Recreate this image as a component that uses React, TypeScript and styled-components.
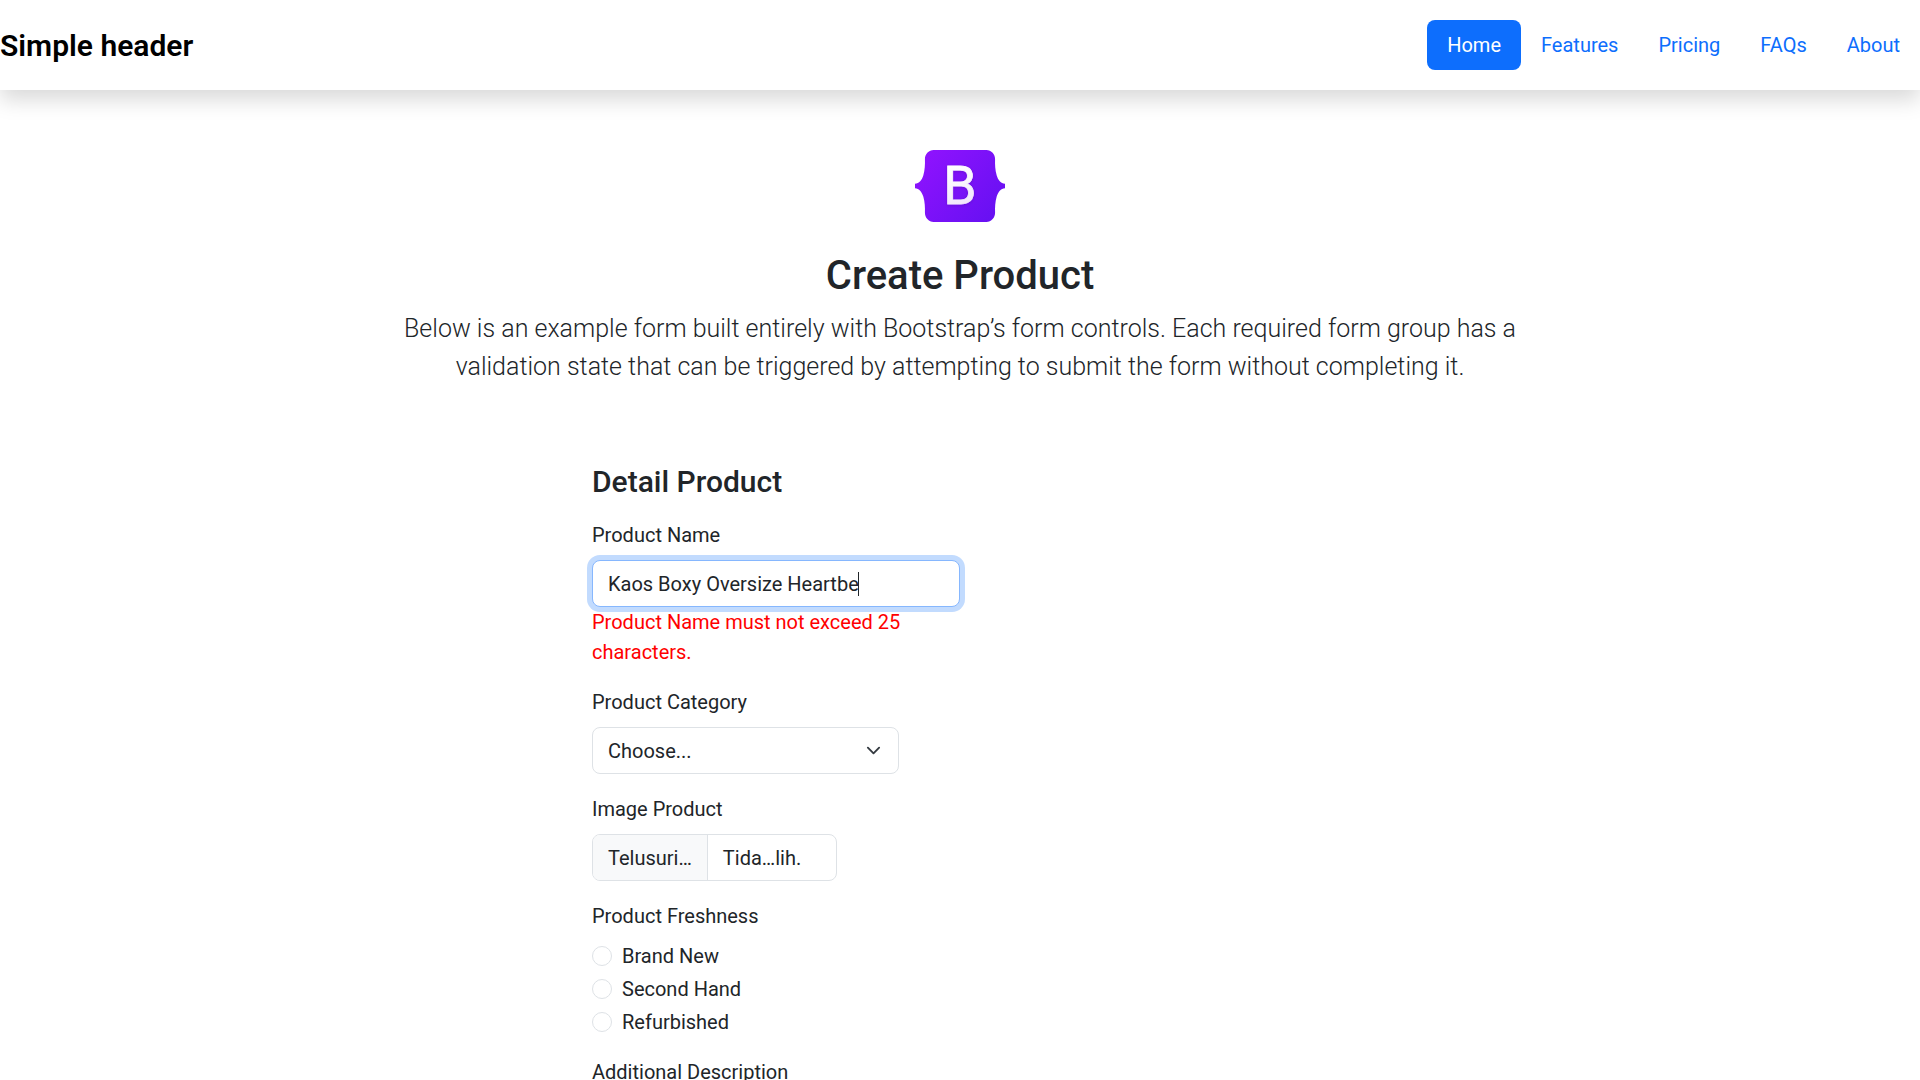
import React, { useState } from "react";
import styled, { createGlobalStyle, css } from "styled-components";

const GlobalStyle = createGlobalStyle`
  *, *::before, *::after { box-sizing: border-box; }
  body {
    margin: 0;
    background: #fff;
    color: #212529;
    font-family: Roboto, "Liberation Sans", sans-serif;
    font-size: 20px;
    line-height: 30px;
  }
  h1, h2, p, fieldset { margin: 0; }
  input, select, textarea { font: inherit; color: inherit; }
`;

const Page = styled.div`
  height: 100vh;
  overflow: hidden;
`;

const Header = styled.header`
  display: flex;
  align-items: center;
  justify-content: space-between;
  padding: 20px 0;
  box-shadow: 0 10px 20px rgba(0, 0, 0, 0.15);
`;

const Brand = styled.a`
  color: #000;
  font-size: 30px;
  line-height: 45px;
  font-weight: 600;
  text-decoration: none;
`;

const Nav = styled.nav`
  display: flex;
`;

const NavLink = styled.a<{ $active?: boolean }>`
  padding: 10px 20px;
  border-radius: 8px;
  text-decoration: none;
  color: ${(p) => (p.$active ? "#fff" : "#0d6efd")};
  background: ${(p) => (p.$active ? "#0d6efd" : "transparent")};
`;

const Main = styled.main`
  max-width: 1200px;
  margin: 0 auto;
  padding: 0 15px;
`;

const Hero = styled.section`
  display: flex;
  flex-direction: column;
  align-items: center;
  padding: 60px 0;
  text-align: center;
`;

const Logo = styled.svg`
  display: block;
  width: 90px;
  height: 72px;
  margin-bottom: 30px;
`;

const Title = styled.h1`
  margin-bottom: 10px;
  font-size: 40px;
  line-height: 48px;
  font-weight: 500;
`;

const Lead = styled.p`
  font-size: 25px;
  line-height: 38px;
  font-weight: 300;
`;

const Form = styled.form`
  display: flex;
  flex-direction: column;
  gap: 20px;
  max-width: 736px;
  margin: 18px auto 0;
`;

const SectionTitle = styled.h2`
  font-size: 30px;
  line-height: 36px;
  font-weight: 500;
`;

const Field = styled.div<{ $columns: number }>`
  display: flex;
  flex-direction: column;
  width: calc(100% * ${(p) => p.$columns} / 12);
`;

const labelStyle = css`
  margin-bottom: 10px;
`;

const Label = styled.label`
  ${labelStyle}
`;

const controlStyle = css`
  width: 100%;
  height: 47px;
  border: 1px solid #dee2e6;
  border-radius: 8px;
  background: #fff;
`;

const TextBox = styled.div`
  position: relative;
`;

const TextInput = styled.input`
  ${controlStyle}
  display: block;
  padding: 7px 15px;
  border-color: #86b7fe;
  outline: 0;
  box-shadow: 0 0 0 5px #c2dbfe;
  caret-color: transparent;
`;

const Caret = styled.span`
  position: absolute;
  top: 12px;
  left: 266px;
  width: 1px;
  height: 24px;
  background: #212529;
`;

const ErrorText = styled.p`
  color: #f00;
`;

const SelectBox = styled.div`
  display: grid;
  align-items: center;
`;

const Select = styled.select`
  ${controlStyle}
  grid-area: 1 / 1;
  appearance: none;
  padding: 7px 45px 7px 15px;
`;

const Chevron = styled.svg`
  grid-area: 1 / 1;
  justify-self: end;
  width: 15px;
  height: 15px;
  margin-right: 18px;
  pointer-events: none;
`;

const FilePicker = styled.label`
  ${controlStyle}
  display: flex;
  overflow: hidden;
`;

const FileInput = styled.input`
  width: 0;
  height: 0;
  opacity: 0;
`;

const FileButton = styled.span`
  padding: 8px 15px 7px;
  border-right: 1px solid #dee2e6;
  background: #f8f9fa;
`;

const FileName = styled.span`
  padding: 8px 15px 7px;
`;

const RadioGroup = styled.fieldset`
  display: flex;
  flex-direction: column;
  gap: 3px;
  min-width: 0;
  padding: 0;
  border: 0;
`;

const Legend = styled.legend`
  ${labelStyle}
  padding: 0;
`;

const RadioLabel = styled.label`
  display: flex;
  align-items: center;
  gap: 10px;
`;

const Radio = styled.input`
  appearance: none;
  width: 20px;
  height: 20px;
  margin: 0;
  border: 1px solid #dee2e6;
  border-radius: 50%;
  background: #fff;

  &:checked {
    border: 6px solid #0d6efd;
  }
`;

const TextArea = styled.textarea`
  ${controlStyle}
  height: 120px;
  padding: 7px 15px;
`;

const links = ["Home", "Features", "Pricing", "FAQs", "About"];
const conditions = ["Brand New", "Second Hand", "Refurbished"];

function BootstrapLogo() {
  return (
    <Logo viewBox="0 0 118 94" preserveAspectRatio="none" role="img" aria-label="Bootstrap">
      <defs>
        <linearGradient id="body" x1="10" y1="2" x2="108" y2="90" gradientUnits="userSpaceOnUse">
          <stop stopColor="#9013fe" />
          <stop offset="1" stopColor="#6610f2" />
        </linearGradient>
        <linearGradient id="letter" x1="50" y1="21" x2="65" y2="72" gradientUnits="userSpaceOnUse">
          <stop stopColor="#fff" />
          <stop offset="1" stopColor="#f1e5fc" />
        </linearGradient>
        <filter id="shade" x="-20%" y="-20%" width="140%" height="140%">
          <feDropShadow dx="0" dy="1" stdDeviation="2" floodOpacity="0.15" />
        </filter>
      </defs>
      <path
        fill="url(#body)"
        d="M24.509 0c-6.733 0-11.715 5.893-11.492 12.284.214 6.14-.064 14.092-2.066 20.577C8.943 39.365 5.547 43.485 0 44.014v5.972c5.547.529 8.943 4.649 10.951 11.153 2.002 6.485 2.28 14.437 2.066 20.577C12.794 88.106 17.776 94 24.51 94H93.5c6.733 0 11.714-5.893 11.491-12.284-.214-6.14.064-14.092 2.066-20.577 2.009-6.504 5.396-10.624 10.943-11.153v-5.972c-5.547-.529-8.934-4.649-10.943-11.153-2.002-6.484-2.28-14.437-2.066-20.577C105.214 5.894 100.233 0 93.5 0H24.508z"
      />
      <text
        x="59"
        y="71"
        textAnchor="middle"
        fontSize="70"
        fontWeight="400"
        fontFamily="Roboto, sans-serif"
        fill="url(#letter)"
        stroke="url(#letter)"
        strokeWidth="1"
        filter="url(#shade)"
      >
        B
      </text>
    </Logo>
  );
}

export default function App() {
  const [name, setName] = useState("Kaos Boxy Oversize Heartbe");

  return (
    <Page>
      <GlobalStyle />
      <Header>
        <Brand href="#">Simple header</Brand>
        <Nav>
          {links.map((link, i) => (
            <NavLink key={link} href="#" $active={i === 0}>
              {link}
            </NavLink>
          ))}
        </Nav>
      </Header>
      <Main>
        <Hero>
          <BootstrapLogo />
          <Title>Create Product</Title>
          <Lead>
            Below is an example form built entirely with Bootstrap’s form controls. Each required form group has a
            validation state that can be triggered by attempting to submit the form without completing it.
          </Lead>
        </Hero>
        <Form>
          <SectionTitle>Detail Product</SectionTitle>
          <Field $columns={6}>
            <Label htmlFor="name">Product Name</Label>
            <TextBox>
              <TextInput id="name" type="text" value={name} onChange={(e) => setName(e.target.value)} />
              <Caret />
            </TextBox>
            {name.length > 25 && <ErrorText>Product Name must not exceed 25 characters.</ErrorText>}
          </Field>
          <Field $columns={5}>
            <Label htmlFor="category">Product Category</Label>
            <SelectBox>
              <Select id="category">
                <option>Choose...</option>
              </Select>
              <Chevron viewBox="0 0 16 16" fill="none" aria-hidden="true">
                <path d="m2 5 6 6 6-6" stroke="#343a40" strokeWidth="2" strokeLinecap="round" strokeLinejoin="round" />
              </Chevron>
            </SelectBox>
          </Field>
          <Field $columns={4}>
            <Label htmlFor="image">Image Product</Label>
            <FilePicker>
              <FileButton>Telusuri…</FileButton>
              <FileName>Tida…lih.</FileName>
              <FileInput id="image" type="file" />
            </FilePicker>
          </Field>
          <RadioGroup>
            <Legend>Product Freshness</Legend>
            {conditions.map((condition) => (
              <RadioLabel key={condition}>
                <Radio type="radio" name="freshness" value={condition} />
                {condition}
              </RadioLabel>
            ))}
          </RadioGroup>
          <Field $columns={12}>
            <Label htmlFor="description">Additional Description</Label>
            <TextArea id="description" />
          </Field>
        </Form>
      </Main>
    </Page>
  );
}
